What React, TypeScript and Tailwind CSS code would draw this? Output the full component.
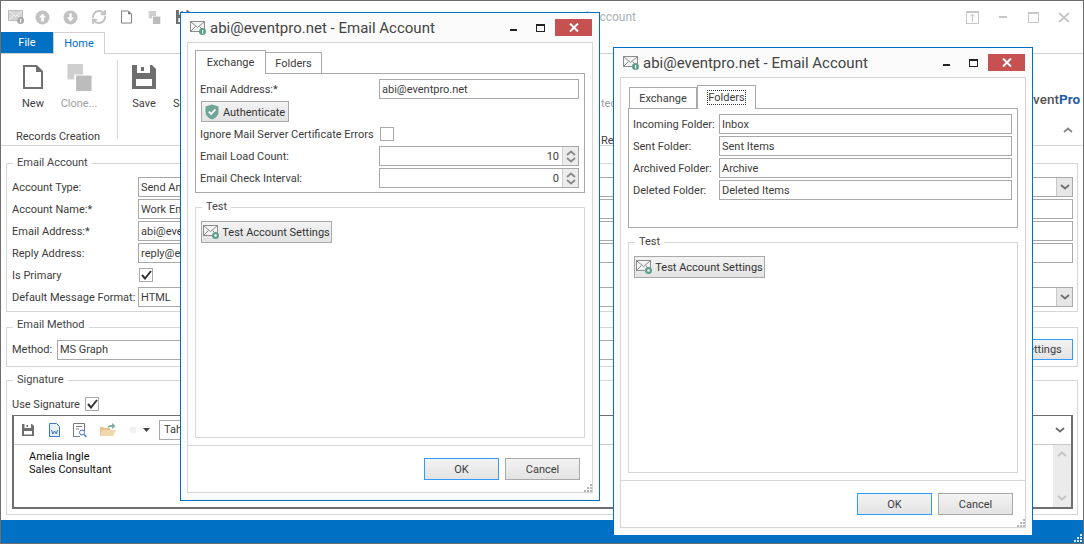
import React from 'react';
import { RefreshCw } from 'lucide-react';

const Chevron: React.FC<{ up?: boolean; color?: string }> = ({ up, color = '#6e6e6e' }) => (
  <svg width="10" height="6" viewBox="0 0 10 6" fill="none">
    <path d={up ? 'M1 5L5 1.5L9 5' : 'M1 1L5 4.5L9 1'} stroke={color} strokeWidth="1.8" />
  </svg>
);

const MailIcon: React.FC<{ badge?: 'info' | 'gear' | 'gray' }> = ({ badge = 'info' }) => (
  <svg width="17" height="16" viewBox="0 0 17 16" fill="none">
    <rect x="0.5" y="1.5" width="14" height="10" fill={badge === 'gray' ? '#d4d4d4' : '#f4f4f4'} stroke={badge === 'gray' ? '#bdbdbd' : '#8c8c8c'} />
    <path d="M1 2L7.5 7.5L14 2M1 11L5.5 6.5M14 11L9.5 6.5" stroke={badge === 'gray' ? '#f2f2f2' : '#8c8c8c'} />
    <circle cx="12.5" cy="11.5" r="3.5" fill={badge === 'gray' ? '#a8a8a8' : '#5f9f8d'} />
    {badge === 'gear' ? <circle cx="12.5" cy="11.5" r="1.2" fill="#fff" /> : <rect x="12" y="10" width="1.2" height="3.5" fill="#fff" />}
  </svg>
);

const Shield = () => (
  <svg width="14" height="16" viewBox="0 0 14 16">
    <path d="M7 .5L13.5 2.5V8C13.5 11.5 10.5 14.3 7 15.5C3.5 14.3.5 11.5.5 8V2.5Z" fill="#6fa596" />
    <path d="M3.8 7.6L6.2 10L10.4 5.4" stroke="#fff" strokeWidth="1.8" fill="none" />
  </svg>
);

const CircleArrow: React.FC<{ down?: boolean }> = ({ down }) => (
  <svg width="15" height="15" viewBox="0 0 15 15">
    <circle cx="7.5" cy="7.5" r="7" fill="#c2c2c2" />
    <path d={down ? 'M6.2 3.5H8.8V7.5H11L7.5 11.5L4 7.5H6.2Z' : 'M6.2 11.5H8.8V7.5H11L7.5 3.5L4 7.5H6.2Z'} fill="#fff" />
  </svg>
);

const PageIcon: React.FC<{ w: number; h: number; stroke: number }> = ({ w, h, stroke }) => (
  <svg width={w} height={h} viewBox="0 0 20 24" fill="none">
    <path d="M1 1H13.5L19 6.5V23H1Z" stroke="#707070" strokeWidth={stroke} />
    <path d="M13 1V7H19" fill="#707070" />
  </svg>
);

const CloneIcon: React.FC<{ size: number }> = ({ size }) => (
  <svg width={size} height={size} viewBox="0 0 25 28">
    <rect x="0" y="0" width="16" height="16" fill="#cfcfcf" />
    <rect x="7" y="11" width="18" height="17" fill="#fff" />
    <rect x="9" y="12" width="16" height="16" fill="#bcbcbc" />
  </svg>
);

const SaveIcon: React.FC<{ size: number }> = ({ size }) => (
  <svg width={size} height={size} viewBox="0 0 24 24">
    <path d="M0 0H20L24 4V24H0Z" fill="#6e6e6e" />
    <rect x="5" y="0" width="13" height="8" fill="#fff" />
    <rect x="9" y="2" width="3" height="4" fill="#6e6e6e" />
    <rect x="4" y="14" width="16" height="7" fill="#fff" />
  </svg>
);

const Grip: React.FC<{ color?: string }> = ({ color = '#b5b5b5' }) => (
  <svg width="8" height="8" viewBox="0 0 8 8" fill={color}>
    <rect x="6" y="0" width="2" height="2" />
    <rect x="3" y="3" width="2" height="2" />
    <rect x="6" y="3" width="2" height="2" />
    <rect x="0" y="6" width="2" height="2" />
    <rect x="3" y="6" width="2" height="2" />
    <rect x="6" y="6" width="2" height="2" />
  </svg>
);

const Check = () => (
  <svg width="11" height="10" viewBox="0 0 11 10" fill="none">
    <path d="M1 5L4 8.5L10 1" stroke="#333" strokeWidth="2" />
  </svg>
);

const CheckBox: React.FC<{ checked?: boolean }> = ({ checked }) => (
  <span className="flex h-[14px] w-[14px] items-center justify-center border border-[#a9a9a9] bg-white">
    {checked && <Check />}
  </span>
);

const Label: React.FC<{ width: string; children: React.ReactNode }> = ({ width, children }) => (
  <span className={`whitespace-nowrap pt-[2px] ${width}`}>{children}</span>
);

const Field: React.FC<{ value?: string; className?: string }> = ({ value, className = '' }) => (
  <div className={`flex h-[20px] items-center overflow-hidden whitespace-nowrap border border-[#a9a9a9] bg-white pl-[2px] pt-[2px] ${className}`}>
    {value}
  </div>
);

const Combo: React.FC<{ value: string }> = ({ value }) => (
  <div className="flex h-[20px] flex-1 items-center border border-[#a9a9a9] bg-white pl-[2px]">
    <span className="flex-1 pt-[2px]">{value}</span>
    <span className="flex h-full w-[16px] items-center justify-center border-l border-[#c8c8c8] bg-[#e6e6e6]">
      <Chevron />
    </span>
  </div>
);

const Spin: React.FC<{ value: string }> = ({ value }) => (
  <div className="flex h-[20px] flex-1 items-center border border-[#a9a9a9] bg-white">
    <span className="flex-1 pr-[3px] pt-[2px] text-right">{value}</span>
    <span className="flex h-full w-[16px] flex-col items-center justify-around border-l border-[#cfcfcf] bg-[#ececec] py-[2px]">
      <Chevron up color="#8a8a8a" />
      <Chevron color="#8a8a8a" />
    </span>
  </div>
);

const Button: React.FC<{ children: React.ReactNode; blue?: boolean; className?: string }> = ({ children, blue, className = '' }) => (
  <div className={`flex items-center justify-center border bg-linear-to-b from-[#f3f3f3] to-[#e3e3e3] whitespace-nowrap ${blue ? 'border-[#3399ff]' : 'border-[#a9a9a9]'} ${className}`}>
    {children}
  </div>
);

const Group: React.FC<{ title: string; className?: string; legendClass?: string; children: React.ReactNode }> = ({ title, className = '', legendClass = 'leading-[14px]', children }) => (
  <fieldset className={`border border-[#d6d6d6] ${className}`}>
    <legend className={`ml-[1px] h-[14px] px-[4px] text-[#444] ${legendClass}`}>{title}</legend>
    {children}
  </fieldset>
);

const TestButton = () => (
  <Button className="h-[22px] w-[131px] gap-[2px] text-[#333]">
    <MailIcon badge="gear" />
    <span className="pt-[2px]">Test Account Settings</span>
  </Button>
);

const Dialog: React.FC<{ position: string; tab: 'exchange' | 'folders' }> = ({ position, tab }) => {
  const exchange = tab === 'exchange';
  return (
    <div className={`absolute flex h-[489px] w-[420px] flex-col border border-[#0070c4] bg-[#fbfbfb] ${position}`}>
      <div className="flex h-[29px] items-center pl-[9px] text-[#444]">
        <MailIcon />
        <span className="ml-[3px] pt-[2px] text-[15px]">abi@eventpro.net - Email Account</span>
        <div className="ml-auto mr-[7px] flex items-start self-start pt-[6px]">
          <span className="mt-[10px] h-[2px] w-[7px] bg-[#222]" />
          <span className="ml-[19px] mt-[5px] h-[8px] w-[9px] border border-t-2 border-[#222]" />
          <span className="ml-[10px] flex h-[17px] w-[37px] items-center justify-center bg-[#c75050]">
            <svg width="10" height="9" viewBox="0 0 10 9">
              <path d="M1 .5L9 8.5M9 .5L1 8.5" stroke="#fff" strokeWidth="2" />
            </svg>
          </span>
        </div>
      </div>

      <div className="relative mx-[6px] mb-[7px] flex flex-1 flex-col border border-[#d6d6d6] bg-white">
        <div className="px-[7px] pt-[7px]">
          <div className={`flex h-[23px] items-end ${exchange ? '' : 'pl-px'}`}>
            <div className={`relative flex items-center justify-center border border-[#a9a9a9] bg-white ${exchange ? 'z-10 -mb-px h-[24px] w-[71px] border-b-0 pt-[2px]' : 'h-[21px] w-[68px] border-b-0 pt-[2px]'}`}>
              Exchange
            </div>
            <div className={`relative flex items-center justify-center border border-[#a9a9a9] bg-white ${exchange ? 'h-[21px] w-[56px] border-b-0 border-l-0 pt-[3px]' : 'z-10 -mb-px h-[24px] w-[59px] border-b-0'}`}>
              {exchange ? 'Folders' : <span className="border border-dotted border-[#333] leading-[13px]">Folders</span>}
            </div>
          </div>

          {exchange ? (
            <div className="flex h-[120px] flex-col gap-[2px] border border-[#a9a9a9] pl-[4px] pr-[5px] pt-[5px]">
              <div className="flex items-center">
                <Label width="w-[179px]">Email Address:*</Label>
                <Field value="abi@eventpro.net" className="flex-1" />
              </div>
              <Button className="ml-px h-[21px] w-[88px] gap-[4px] text-[#333]">
                <Shield />
                <span className="pt-[3px]">Authenticate</span>
              </Button>
              <div className="flex h-[20px] items-center">
                <Label width="w-[180px]">Ignore Mail Server Certificate Errors</Label>
                <CheckBox />
              </div>
              <div className="flex items-center">
                <Label width="w-[179px]">Email Load Count:</Label>
                <Spin value="10" />
              </div>
              <div className="flex items-center">
                <Label width="w-[179px]">Email Check Interval:</Label>
                <Spin value="0" />
              </div>
            </div>
          ) : (
            <div className="flex h-[120px] flex-col gap-[2px] border border-[#a9a9a9] pl-[4px] pr-[5px] pt-[5px]">
              {[
                ['Incoming Folder:', 'Inbox'],
                ['Sent Folder:', 'Sent Items'],
                ['Archived Folder:', 'Archive'],
                ['Deleted Folder:', 'Deleted Items'],
              ].map(([label, value]) => (
                <div key={label} className="flex items-center">
                  <Label width="w-[86px]">{label}</Label>
                  <Field value={value} className="flex-1" />
                </div>
              ))}
            </div>
          )}

          <Group title="Test" className="mt-[7px] h-[238px] pl-[5px] pt-[7px]">
            <TestButton />
          </Group>
        </div>

        <div className="mt-[7px] flex flex-1 justify-end gap-[6px] border-t border-[#d6d6d6] pr-[12px] pt-[12px]">
          <Button blue className="h-[22px] w-[75px] pt-[2px]">OK</Button>
          <Button className="h-[22px] w-[75px] pt-[2px]">Cancel</Button>
        </div>
        <div className="absolute bottom-0 right-0 flex">
          <Grip />
        </div>
      </div>
    </div>
  );
};

const fields = [
  ['Account Name:*', 'Work Email'],
  ['Email Address:*', 'abi@eventpro.net'],
  ['Reply Address:', 'reply@eventpro.net'],
];

export default function App() {
  return (
    <div className="relative flex h-[544px] w-[1084px] flex-col overflow-hidden border border-[#6e6e6e] bg-white font-['Roboto',sans-serif] text-[11px] text-[#3c3c3c]">
      {/* title bar */}
      <div className="flex h-[31px] items-center pt-[1px]">
        <div className="flex w-[190px] items-center pl-[7px]">
          <MailIcon badge="gray" />
          <span className="ml-[10px]"><CircleArrow /></span>
          <span className="ml-[13px]"><CircleArrow down /></span>
          <span className="ml-[13px]"><RefreshCw size={16} strokeWidth={3} color="#c2c2c2" /></span>
          <span className="ml-[14px]"><PageIcon w={11} h={14} stroke={1.6} /></span>
          <span className="ml-[16px]"><CloneIcon size={13} /></span>
          <span className="ml-[15px]"><SaveIcon size={14} /></span>
        </div>
        <span className="w-[445px] text-right text-[12px] text-[#aab0b8]">Email Account</span>
        <div className="ml-auto flex items-center pr-[13px]">
          <span className="flex h-[13px] w-[13px] flex-col items-center border border-t-2 border-[#c8c8c8]">
            <svg width="7" height="9" viewBox="0 0 7 9" fill="none">
              <path d="M3.5 9V1M1 3.5L3.5 1L6 3.5" stroke="#c8c8c8" />
            </svg>
          </span>
          <span className="ml-[20px] h-[2px] w-[8px] bg-[#c8c8c8]" />
          <span className="ml-[21px] h-[11px] w-[11px] border border-t-2 border-[#c8c8c8]" />
          <svg className="ml-[19px]" width="12" height="11" viewBox="0 0 12 11">
            <path d="M1 1L11 10M11 1L1 10" stroke="#c8c8c8" strokeWidth="2" />
          </svg>
        </div>
      </div>

      {/* ribbon tabs */}
      <div className="flex h-[22px] border-b border-[#d0d0d0]">
        <div className="flex h-[21px] w-[52px] items-center justify-center bg-[#0070c4] pt-[2px] text-white">File</div>
        <div className="z-10 flex h-[22px] w-[52px] items-center justify-center border-x border-t border-[#d0d0d0] bg-white pt-[2px] text-[#0070c4]">Home</div>
      </div>

      {/* ribbon */}
      <div className="flex h-[92px] border-b border-[#d4d4d4]">
        <div className="flex w-[116px] flex-col">
          <div className="flex h-[67px] pl-[21px] pt-[8px]">
            <div className="flex w-[22px] flex-col items-center">
              <span className="flex h-[30px] items-center"><PageIcon w={20} h={24} stroke={2} /></span>
              <span className="mt-[5px] leading-[14px]">New</span>
            </div>
            <div className="ml-[15px] flex w-[40px] flex-col items-center text-[#a0a0a0]">
              <span className="flex h-[30px] items-center"><CloneIcon size={27} /></span>
              <span className="mt-[5px] whitespace-nowrap leading-[14px]">Clone...</span>
            </div>
          </div>
          <div className="pl-[15px] pt-[8px] leading-[16px] whitespace-nowrap">Records Creation</div>
        </div>
        <div className="my-[6px] w-px bg-[#d8d8d8]" />
        <div className="flex h-[67px] w-[481px] pl-[14px] pt-[8px]">
          <div className="flex w-[24px] flex-col items-center">
            <span className="flex h-[30px] items-center"><SaveIcon size={24} /></span>
            <span className="mt-[5px] leading-[14px]">Save</span>
          </div>
          <span className="ml-[17px] mt-[35px] leading-[14px]">Save</span>
        </div>
        <div className="flex w-[60px] flex-col pl-[2px]">
          <span className="pt-[42px] text-[#a0a0a0]">ted</span>
          <span className="pt-[20px]">Re</span>
        </div>
        <div className="ml-auto flex w-[80px] flex-col items-end pr-[3px]">
          <span className="pt-[35px] text-[13.5px] font-medium whitespace-nowrap text-[#555]">
            Event<span className="font-bold text-[#1d5fa6]">Pro</span>
          </span>
          <span className="pr-[7px] pt-[18px]"><Chevron up color="#888" /></span>
        </div>
      </div>

      {/* form */}
      <div className="flex flex-1 flex-col px-[5px] pt-[10px]">
        <Group title="Email Account" className="h-[156px] pl-[5px] pr-[4px] pt-[7px]">
          <div className="flex flex-col gap-[2px]">
            <div className="flex items-center">
              <Label width="w-[126px]">Account Type:</Label>
              <Combo value="Send And Receive" />
            </div>
            {fields.map(([label, value]) => (
              <div key={label} className="flex items-center">
                <Label width="w-[126px]">{label}</Label>
                <Field value={value} className="flex-1" />
              </div>
            ))}
            <div className="flex h-[20px] items-center">
              <Label width="w-[127px]">Is Primary</Label>
              <CheckBox checked />
            </div>
            <div className="flex items-center">
              <Label width="w-[126px]">Default Message Format:</Label>
              <Combo value="HTML" />
            </div>
          </div>
        </Group>

        <Group title="Email Method" legendClass="leading-[10px]" className="mt-[8px] h-[47px] pl-[5px] pr-[4px] pt-[5px]">
          <div className="flex items-center">
            <Label width="w-[45px]">Method:</Label>
            <Field value="MS Graph" className="flex-1" />
            <Button blue className="ml-[6px] h-[21px] w-[130px] pt-[2px]">Test Account Settings</Button>
          </div>
        </Group>

        <Group title="Signature" className="mt-[6px] h-[142px] pl-[5px] pr-[4px] pt-[10px]">
          <div className="flex h-[14px] items-center">
            <Label width="w-[73px]">Use Signature</Label>
            <CheckBox checked />
          </div>
          <div className="mt-[4px] flex h-[94px] flex-col border-x-2 border-b-2 border-t border-[#6e6e6e]">
            <div className="flex h-[29px] items-center border-b border-[#c8c8c8] pl-[8px]">
              <SaveIcon size={12} />
              <svg className="ml-[15px]" width="11" height="14" viewBox="0 0 11 14">
                <path d="M.5.5H7.5L10.5 3.5V13.5H.5Z" fill="#e8f0fa" stroke="#3b78c4" />
                <path d="M2.5 7L3.8 11L5.5 8L7.2 11L8.5 7" stroke="#3b78c4" fill="none" />
              </svg>
              <svg className="ml-[13px]" width="14" height="15" viewBox="0 0 14 15" fill="none">
                <path d="M.5.5H11.5V8M.5.5V13.5H7" stroke="#7a7a7a" />
                <path d="M3 3.5H9M3 6H6" stroke="#7a7a7a" />
                <circle cx="9" cy="9.5" r="2.5" stroke="#3b78c4" />
                <path d="M11 11.5L13.5 14" stroke="#3b78c4" strokeWidth="1.4" />
              </svg>
              <svg className="ml-[13px]" width="16" height="14" viewBox="0 0 16 14">
                <path d="M0 4H3L4 5H10V13H0Z" fill="#e3c48f" />
                <path d="M2 7H16L13 13H0Z" fill="#f0d7ac" />
                <path d="M7 5C8 2.5 10 2 12 2V0L15.5 3L12 6V4C10 4 8.5 4.2 7 5Z" fill="#7fae9e" />
              </svg>
              <span className="ml-[14px] h-[6px] w-[6px] bg-[#f2f2f2]" />
              <svg className="ml-[7px]" width="7" height="4" viewBox="0 0 7 4">
                <path d="M0 0H7L3.5 4Z" fill="#444" />
              </svg>
              <div className="ml-[9px] flex h-[20px] flex-1 items-center pr-[6px]">
                <span className="flex h-full w-[200px] items-center border border-[#a9a9a9] pl-[4px]">Tahoma</span>
                <span className="ml-auto"><Chevron /></span>
              </div>
            </div>
            <div className="flex flex-1">
              <div className="flex-1 pl-[15px] pt-[5px] leading-[13px] text-[#111]">
                <div>Amelia Ingle</div>
                <div>Sales Consultant</div>
              </div>
              <div className="flex w-[18px] flex-col items-center justify-between bg-[#ebebeb] py-[6px]">
                <Chevron up color="#c4c4c4" />
                <Chevron color="#c4c4c4" />
              </div>
            </div>
          </div>
        </Group>
      </div>

      {/* status bar */}
      <div className="relative flex h-[23px] justify-end bg-[#0070c4]">
        <div className="absolute bottom-[1px] right-[1px] flex">
          <Grip color="#d8e8f5" />
        </div>
      </div>

      <Dialog position="left-[179px] top-[11px]" tab="exchange" />
      <Dialog position="left-[612px] top-[46px]" tab="folders" />
    </div>
  );
}
